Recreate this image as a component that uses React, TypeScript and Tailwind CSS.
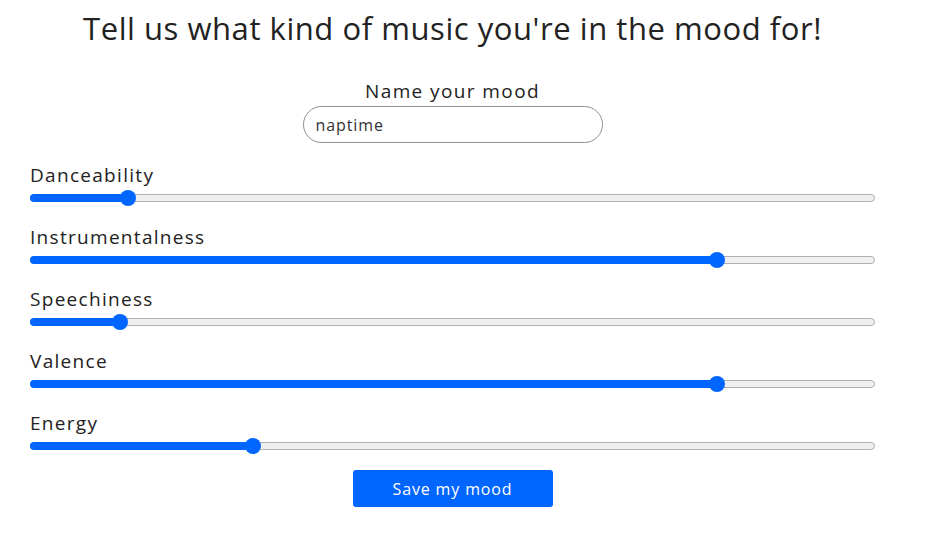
import React from "react";

const sliders = [
  { label: "Danceability", center: 128 },
  { label: "Instrumentalness", center: 717 },
  { label: "Speechiness", center: 120 },
  { label: "Valence", center: 717 },
  { label: "Energy", center: 253 },
];

function Slider({ center }: { center: number }) {
  const pos = center - 30;
  return (
    <div className="relative h-[8px] w-[845px] rounded-full border border-[#b0b0b0] bg-[#efefef]">
      <div
        className="absolute left-[-1px] top-[-1px] h-[8px] rounded-full bg-[#0066ff]"
        style={{ width: pos + 1 }}
      />
      <div
        className="absolute top-[-5px] h-[16px] w-[16px] rounded-full bg-[#0066ff]"
        style={{ left: pos - 9 }}
      />
    </div>
  );
}

export default function App() {
  return (
    <div
      className="w-[905px] bg-white text-[#222] px-[30px] pt-[8px] pb-[30px]"
      style={{ fontFamily: '"Open Sans", "Liberation Sans", sans-serif' }}
    >
      <h1 className="text-center text-[31px] leading-[40px] font-normal tracking-[0.55px]">
        Tell us what kind of music you're in the mood for!
      </h1>
      <div className="mt-[31px] flex flex-col items-center">
        <div className="text-[19px] leading-[24px] tracking-[1.4px]">Name your mood</div>
        <div className="mt-[3px] flex h-[37px] w-[300px] items-center rounded-full border border-[#8f8f8f] px-[12px] text-[16px] text-[#333] tracking-[0.9px]">
          naptime
        </div>
      </div>
      <div className="mt-[20px] flex flex-col gap-[23px]">
        {sliders.map((s) => (
          <div key={s.label} className="flex flex-col gap-[7px]">
            <div className="text-[19px] leading-[24px] tracking-[1.3px]">{s.label}</div>
            <Slider center={s.center} />
          </div>
        ))}
      </div>
      <div className="mt-[20px] flex justify-center">
        <button className="h-[37px] w-[200px] rounded-[3px] bg-[#0066ff] text-[16px] text-white tracking-[0.85px]">
          Save my mood
        </button>
      </div>
    </div>
  );
}
